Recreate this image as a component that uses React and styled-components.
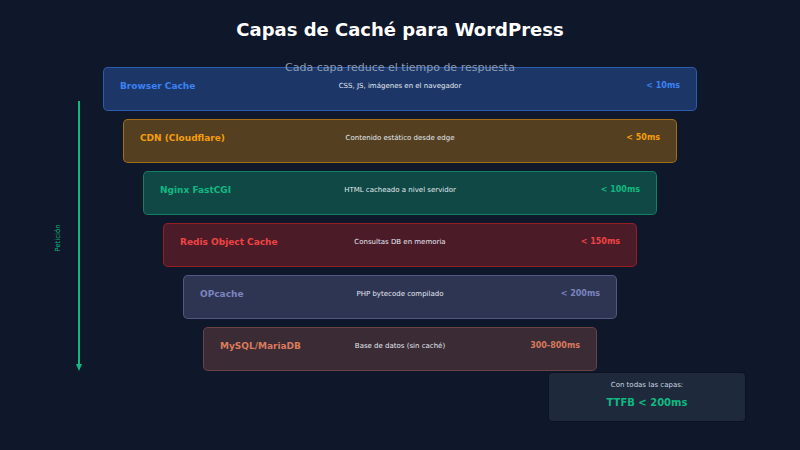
import React from 'react';
import styled, { createGlobalStyle } from 'styled-components';

const Global = createGlobalStyle`
  body { margin: 0; background: #0f172a; font-family: "DejaVu Sans", sans-serif; }
`;

const Page = styled.div`
  position: relative;
  width: 800px;
  height: 450px;
  overflow: hidden;
  background: #0f172a;
`;

const Title = styled.h1`
  margin: 0;
  padding-top: 19px;
  text-align: center;
  font-size: 18px;
  font-weight: bold;
  color: #ffffff;
  line-height: 22px;
`;

const Subtitle = styled.div`
  position: relative;
  z-index: 2;
  margin-top: 20px;
  height: 0;
  text-align: center;
  font-size: 11px;
  color: #8b9bb4;
  line-height: 14px;
`;

const Stack = styled.div`
  display: flex;
  flex-direction: column;
  gap: 8px;
  margin-top: 6px;
`;

const Layer = styled.div`
  box-sizing: border-box;
  height: 44px;
  margin-left: ${p => 103 + p.$i * 20}px;
  margin-right: ${p => 103 + p.$i * 20}px;
  padding: 11px 16px 0;
  display: grid;
  grid-template-columns: 1fr auto 1fr;
  align-items: start;
  border-radius: 5px;
  background: rgba(${p => p.$rgb}, 0.3);
  border: 1px solid rgba(${p => p.$rgb}, 0.5);
`;

const Name = styled.span`
  font-size: 9px;
  font-weight: bold;
  color: ${p => p.$c};
  line-height: 14px;
`;

const Desc = styled.span`
  font-size: 7px;
  color: #e2e8f0;
  line-height: 14px;
  text-align: center;
`;

const Time = styled.span`
  font-size: 8px;
  font-weight: bold;
  color: ${p => p.$c};
  line-height: 14px;
  text-align: right;
`;

const Arrow = styled.svg`
  position: absolute;
  left: 74px;
  top: 100px;
`;

const Side = styled.div`
  position: absolute;
  left: 58px;
  top: 238px;
  transform: translate(-50%, -50%) rotate(-90deg);
  font-size: 7px;
  color: #10b981;
  white-space: nowrap;
`;

const Summary = styled.div`
  box-sizing: border-box;
  margin: 1px 0 0 548px;
  width: 198px;
  height: 50px;
  border-radius: 4px;
  background: #1e293b;
  border: 1px solid #0b1220;
  display: flex;
  flex-direction: column;
  align-items: center;
  padding-top: 7px;
  gap: 6px;
`;

const SumLabel = styled.div`
  font-size: 7px;
  color: #cbd5e1;
  line-height: 10px;
`;

const SumValue = styled.div`
  font-size: 10px;
  font-weight: bold;
  color: #10b981;
  line-height: 14px;
`;

const layers = [
  { name: 'Browser Cache', desc: 'CSS, JS, imágenes en el navegador', time: '< 10ms', rgb: '59,130,246', c: '#3b82f6' },
  { name: 'CDN (Cloudflare)', desc: 'Contenido estático desde edge', time: '< 50ms', rgb: '245,158,11', c: '#f59e0b' },
  { name: 'Nginx FastCGI', desc: 'HTML cacheado a nivel servidor', time: '< 100ms', rgb: '16,185,129', c: '#10b981' },
  { name: 'Redis Object Cache', desc: 'Consultas DB en memoria', time: '< 150ms', rgb: '220,38,38', c: '#ef4444' },
  { name: 'OPcache', desc: 'PHP bytecode compilado', time: '< 200ms', rgb: '119,123,180', c: '#7b84bf' },
  { name: 'MySQL/MariaDB', desc: 'Base de datos (sin caché)', time: '300-800ms', rgb: '160,90,80', c: '#d97a5c' },
];

export default function App() {
  return (
    <Page>
      <Global />
      <Title>Capas de Caché para WordPress</Title>
      <Subtitle>Cada capa reduce el tiempo de respuesta</Subtitle>
      <Stack>
        {layers.map((l, i) => (
          <Layer key={l.name} $i={i} $rgb={l.rgb}>
            <Name $c={l.c}>{l.name}</Name>
            <Desc>{l.desc}</Desc>
            <Time $c={l.c}>{l.time}</Time>
          </Layer>
        ))}
      </Stack>
      <Summary>
        <SumLabel>Con todas las capas:</SumLabel>
        <SumValue>TTFB &lt; 200ms</SumValue>
      </Summary>
      <Arrow width="10" height="272" viewBox="0 0 10 272">
        <line x1="5" y1="1" x2="5" y2="266" stroke="#10b981" strokeWidth="2" />
        <path d="M2 264 L5 271 L8 264 Z" fill="#10b981" />
      </Arrow>
      <Side>Petición</Side>
    </Page>
  );
}
